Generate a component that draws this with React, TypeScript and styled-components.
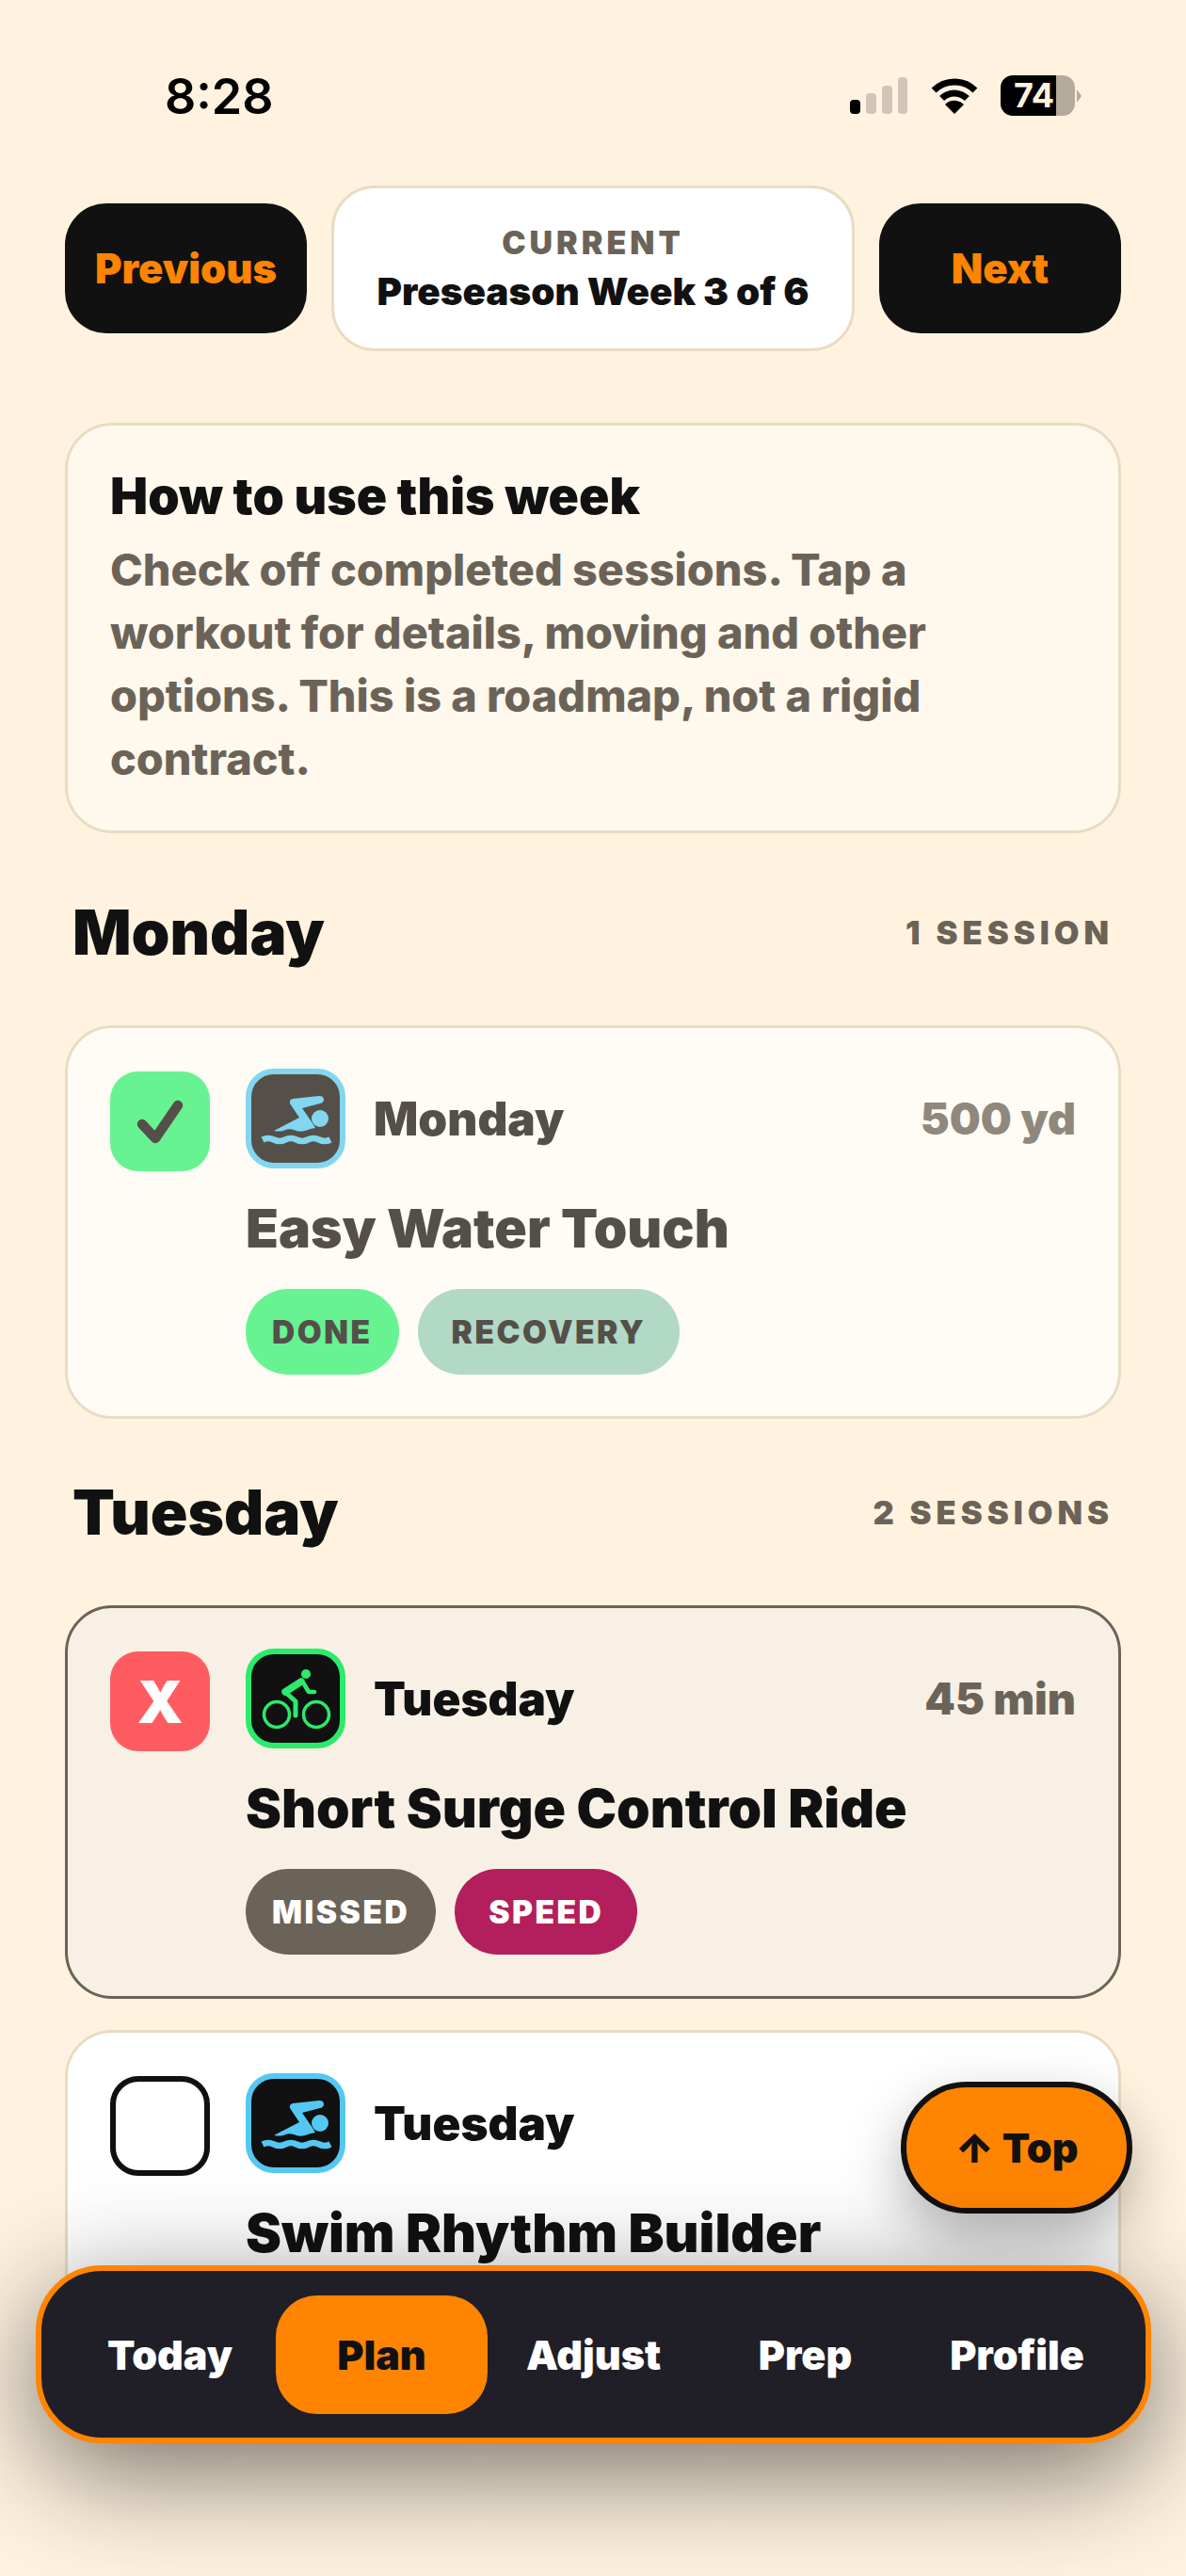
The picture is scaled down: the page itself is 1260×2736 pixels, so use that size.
import React from "react";
import styled, { createGlobalStyle } from "styled-components";

const GlobalStyle = createGlobalStyle`
  html, body {
    margin: 0;
    padding: 0;
    background: #fff3df;
  }
  * {
    box-sizing: border-box;
  }
`;

const Screen = styled.div`
  position: relative;
  width: 1260px;
  height: 2736px;
  overflow: hidden;
  background: #fff3df;
  font-family: Inter, "Liberation Sans", sans-serif;
  color: #111111;
`;

const Content = styled.div`
  display: flex;
  flex-direction: column;
  padding: 0 69px;
`;

const StatusBar = styled.div`
  height: 197px;
  margin-left: 106px;
  margin-right: 49px;
  padding-top: 73px;
  display: flex;
  justify-content: space-between;
  align-items: flex-start;
`;

const Clock = styled.div`
  font-size: 52px;
  line-height: 60px;
  font-weight: 600;
  color: #000;
`;

const StatusIcons = styled.div`
  display: flex;
  align-items: center;
  gap: 22px;
  padding-top: 7px;
`;

const Battery = styled.div`
  position: relative;
  width: 79px;
  height: 43px;
  border-radius: 13px;
  background: linear-gradient(90deg, #000 75%, #b4ab9d 75%);
  color: #fff3df;
  font-size: 36px;
  line-height: 43px;
  font-weight: 700;
  text-align: center;
  padding-right: 8px;
  &::after {
    content: "";
    position: absolute;
    right: -7px;
    top: 15px;
    border-left: 5px solid #b4ab9d;
    border-top: 7px solid transparent;
    border-bottom: 7px solid transparent;
  }
`;

const WeekNav = styled.div`
  display: flex;
  align-items: center;
  gap: 26px;
`;

const WeekButton = styled.div`
  width: 257px;
  height: 138px;
  flex: none;
  border-radius: 44px;
  background: #111111;
  color: #ff8400;
  font-size: 43.5px;
  font-weight: 900;
  display: flex;
  align-items: center;
  justify-content: center;
`;

const WeekLabel = styled.div`
  flex: 1;
  height: 176px;
  border-radius: 46px;
  background: #ffffff;
  border: 3px solid #e9dcc3;
  display: flex;
  flex-direction: column;
  align-items: center;
  justify-content: center;
  gap: 4px;
`;

const WeekEyebrow = styled.div`
  font-size: 34px;
  line-height: 46px;
  font-weight: 900;
  letter-spacing: 4px;
  color: #6c6358;
`;

const WeekName = styled.div`
  font-size: 40.4px;
  line-height: 50px;
  font-weight: 900;
`;

const InfoCard = styled.div`
  margin-top: 76px;
  height: 436px;
  border-radius: 50px;
  background: #fff8ec;
  border: 3px solid #e9dcc3;
  padding: 44px 45px;
`;

const InfoTitle = styled.div`
  font-size: 53.5px;
  line-height: 62px;
  font-weight: 900;
`;

const InfoText = styled.div`
  margin-top: 14px;
  font-size: 46.8px;
  line-height: 67px;
  font-weight: 800;
  color: #6c6358;
`;

const DayHeader = styled.div<{ $top: number }>`
  margin-top: ${(p) => p.$top}px;
  height: 100px;
  margin-bottom: 49px;
  padding: 0 8px;
  display: flex;
  align-items: center;
  justify-content: space-between;
`;

const DayName = styled.div`
  font-size: 65.5px;
  font-weight: 900;
`;

const SessionCount = styled.div`
  font-size: 34.5px;
  font-weight: 900;
  letter-spacing: 5px;
  color: #6c6358;
`;

type CardKind = "done" | "missed" | "open";

const Card = styled.div<{ $kind: CardKind }>`
  min-height: 418px;
  border-radius: 50px;
  padding: 43px 45px 40px;
  display: grid;
  grid-template-columns: 106px 1fr;
  column-gap: 38px;
  border: 3px solid ${(p) => (p.$kind === "missed" ? "#6c6358" : "#e9dcc3")};
  background: ${(p) =>
    p.$kind === "done" ? "#fffcf5" : p.$kind === "missed" ? "#f8f0e5" : "#ffffff"};
  color: ${(p) => (p.$kind === "done" ? "#545049" : "#111111")};
`;

const CheckBox = styled.div<{ $kind: CardKind }>`
  width: 106px;
  height: 106px;
  margin-top: 3px;
  border-radius: 30px;
  display: flex;
  align-items: center;
  justify-content: center;
  background: ${(p) =>
    p.$kind === "done" ? "#67f392" : p.$kind === "missed" ? "#ff5c62" : "transparent"};
  border: ${(p) => (p.$kind === "open" ? "6px solid #111111" : "none")};
  color: #ffffff;
  font-size: 62px;
  font-weight: 900;
`;

const CardBody = styled.div`
  display: flex;
  flex-direction: column;
  min-width: 0;
`;

const CardTop = styled.div`
  display: flex;
  align-items: center;
  gap: 30px;
`;

const SportTile = styled.div<{ $accent: string; $bg: string }>`
  width: 106px;
  height: 106px;
  flex: none;
  border-radius: 30px;
  border: 6px solid ${(p) => p.$accent};
  background: ${(p) => p.$bg};
  color: ${(p) => p.$accent};
  display: flex;
  align-items: center;
  justify-content: center;
`;

const SessionDay = styled.div`
  flex: 1;
  font-size: 49.5px;
  font-weight: 900;
`;

const Amount = styled.div<{ $muted?: boolean }>`
  font-size: 46.5px;
  font-weight: 900;
  color: ${(p) => (p.$muted ? "#8f887c" : "#6c6358")};
`;

const SessionTitle = styled.div`
  margin-top: 31px;
  font-size: 57px;
  line-height: 66px;
  font-weight: 900;
`;

const Chips = styled.div`
  margin-top: 31px;
  display: flex;
  gap: 20px;
`;

const Chip = styled.div<{ $bg: string; $fg: string; $wide?: boolean }>`
  height: 91px;
  padding: 0 ${(p) => (p.$wide ? 36 : 28)}px;
  border-radius: 46px;
  background: ${(p) => p.$bg};
  color: ${(p) => p.$fg};
  font-size: 33.5px;
  font-weight: 900;
  letter-spacing: 2.5px;
  display: flex;
  align-items: center;
`;

const CardGap = styled.div`
  height: 33px;
`;

const TopButton = styled.div`
  position: absolute;
  left: 957px;
  top: 2211px;
  width: 246px;
  height: 140px;
  border-radius: 70px;
  background: #ff8400;
  border: 6px solid #111111;
  color: #111111;
  font-size: 43px;
  font-weight: 900;
  display: flex;
  align-items: center;
  justify-content: center;
  box-shadow: 0 24px 60px rgba(0, 0, 0, 0.3);
`;

const TabBar = styled.div`
  position: absolute;
  left: 38px;
  top: 2406px;
  width: 1185px;
  height: 189px;
  border-radius: 70px;
  background: #201f28;
  border: 6px solid #ff8400;
  padding: 0 24px;
  display: grid;
  grid-template-columns: repeat(5, 1fr);
  align-items: center;
  box-shadow: 0 30px 120px rgba(0, 0, 0, 0.55);
`;

const Tab = styled.div<{ $active?: boolean }>`
  height: 126px;
  border-radius: 44px;
  display: flex;
  align-items: center;
  justify-content: center;
  font-size: 43px;
  font-weight: 900;
  background: ${(p) => (p.$active ? "#ff8400" : "transparent")};
  color: ${(p) => (p.$active ? "#111111" : "#ffffff")};
`;

function SignalIcon() {
  return (
    <svg width="62" height="40" viewBox="0 0 62 40">
      <rect x="0" y="24" width="11" height="15" rx="4" fill="#000" />
      <rect x="17" y="17" width="11" height="22" rx="4" fill="#cfc6b7" />
      <rect x="34" y="9" width="11" height="30" rx="4" fill="#cfc6b7" />
      <rect x="51" y="0" width="10" height="39" rx="4" fill="#cfc6b7" />
    </svg>
  );
}

function WifiIcon() {
  return (
    <svg width="54" height="40" viewBox="0 0 54 40">
      <path d="M5.1 14.1A31 31 0 0 1 48.9 14.1" fill="none" stroke="#000" strokeWidth="7" />
      <path d="M13.6 22.6A19 19 0 0 1 40.4 22.6" fill="none" stroke="#000" strokeWidth="7" />
      <path d="M27 39L17 29A14 14 0 0 1 37 29Z" fill="#000" />
    </svg>
  );
}

function CheckIcon() {
  return (
    <svg width="106" height="106" viewBox="0 0 106 106">
      <path
        d="M34 56L48 71L72 36"
        fill="none"
        stroke="#545049"
        strokeWidth="10.5"
        strokeLinecap="round"
        strokeLinejoin="round"
      />
    </svg>
  );
}

function SwimIcon() {
  return (
    <svg width="94" height="94" viewBox="6 6 94 94">
      <circle cx="79" cy="53" r="9" fill="currentColor" />
      <path
        d="M47 37Q46 33 50 32L78 29Q83 29 83 33Q83 36 79 37L60 42L71 58L74 63Q68 64 63 66Q57 68 51 65Q45 63 40 66Q35 67 30 66L57 52Z"
        fill="currentColor"
      />
      <path
        d="M18 75.5q6 -3 12 0t12 0t12 0t12 0t12 0t12 0"
        fill="none"
        stroke="currentColor"
        strokeWidth="6.5"
      />
    </svg>
  );
}

function BikeIcon() {
  return (
    <svg width="94" height="94" viewBox="6 6 94 94">
      <circle cx="64" cy="27" r="5" fill="currentColor" />
      <circle cx="33" cy="70" r="13.5" fill="none" stroke="currentColor" strokeWidth="3.5" />
      <circle cx="75" cy="70" r="13.5" fill="none" stroke="currentColor" strokeWidth="3.5" />
      <path d="M42 46L59 35" fill="none" stroke="currentColor" strokeWidth="7.5" strokeLinecap="round" />
      <path d="M61 36L67 46L73 46" fill="none" stroke="currentColor" strokeWidth="4.5" strokeLinecap="round" strokeLinejoin="round" />
      <path d="M43 47L53 56L53 71" fill="none" stroke="currentColor" strokeWidth="5" strokeLinecap="round" strokeLinejoin="round" />
    </svg>
  );
}

export default function App() {
  return (
    <Screen>
      <GlobalStyle />
      <Content>
        <StatusBar>
          <Clock>8:28</Clock>
          <StatusIcons>
            <SignalIcon />
            <WifiIcon />
            <Battery>74</Battery>
          </StatusIcons>
        </StatusBar>

        <WeekNav>
          <WeekButton>Previous</WeekButton>
          <WeekLabel>
            <WeekEyebrow>CURRENT</WeekEyebrow>
            <WeekName>Preseason Week 3 of 6</WeekName>
          </WeekLabel>
          <WeekButton>Next</WeekButton>
        </WeekNav>

        <InfoCard>
          <InfoTitle>How to use this week</InfoTitle>
          <InfoText>
            Check off completed sessions. Tap a workout for details, moving and other options. This
            is a roadmap, not a rigid contract.
          </InfoText>
        </InfoCard>

        <DayHeader $top={55}>
          <DayName>Monday</DayName>
          <SessionCount>1 SESSION</SessionCount>
        </DayHeader>
        <Card $kind="done">
          <CheckBox $kind="done">
            <CheckIcon />
          </CheckBox>
          <CardBody>
            <CardTop>
              <SportTile $accent="#82d6f0" $bg="#545049">
                <SwimIcon />
              </SportTile>
              <SessionDay>Monday</SessionDay>
              <Amount $muted>500 yd</Amount>
            </CardTop>
            <SessionTitle>Easy Water Touch</SessionTitle>
            <Chips>
              <Chip $bg="#67f392" $fg="#545049">DONE</Chip>
              <Chip $bg="#b2d8c6" $fg="#545049" $wide>RECOVERY</Chip>
            </Chips>
          </CardBody>
        </Card>

        <DayHeader $top={49}>
          <DayName>Tuesday</DayName>
          <SessionCount>2 SESSIONS</SessionCount>
        </DayHeader>
        <Card $kind="missed">
          <CheckBox $kind="missed">X</CheckBox>
          <CardBody>
            <CardTop>
              <SportTile $accent="#2bea6c" $bg="#111111">
                <BikeIcon />
              </SportTile>
              <SessionDay>Tuesday</SessionDay>
              <Amount>45 min</Amount>
            </CardTop>
            <SessionTitle>Short Surge Control Ride</SessionTitle>
            <Chips>
              <Chip $bg="#6c6358" $fg="#ffffff">MISSED</Chip>
              <Chip $bg="#b31f5c" $fg="#ffffff" $wide>SPEED</Chip>
            </Chips>
          </CardBody>
        </Card>
        <CardGap />
        <Card $kind="open">
          <CheckBox $kind="open" />
          <CardBody>
            <CardTop>
              <SportTile $accent="#54c8f2" $bg="#111111">
                <SwimIcon />
              </SportTile>
              <SessionDay>Tuesday</SessionDay>
            </CardTop>
            <SessionTitle>Swim Rhythm Builder</SessionTitle>
          </CardBody>
        </Card>
      </Content>

      <TopButton>↑ Top</TopButton>
      <TabBar>
        <Tab>Today</Tab>
        <Tab $active>Plan</Tab>
        <Tab>Adjust</Tab>
        <Tab>Prep</Tab>
        <Tab>Profile</Tab>
      </TabBar>
    </Screen>
  );
}
